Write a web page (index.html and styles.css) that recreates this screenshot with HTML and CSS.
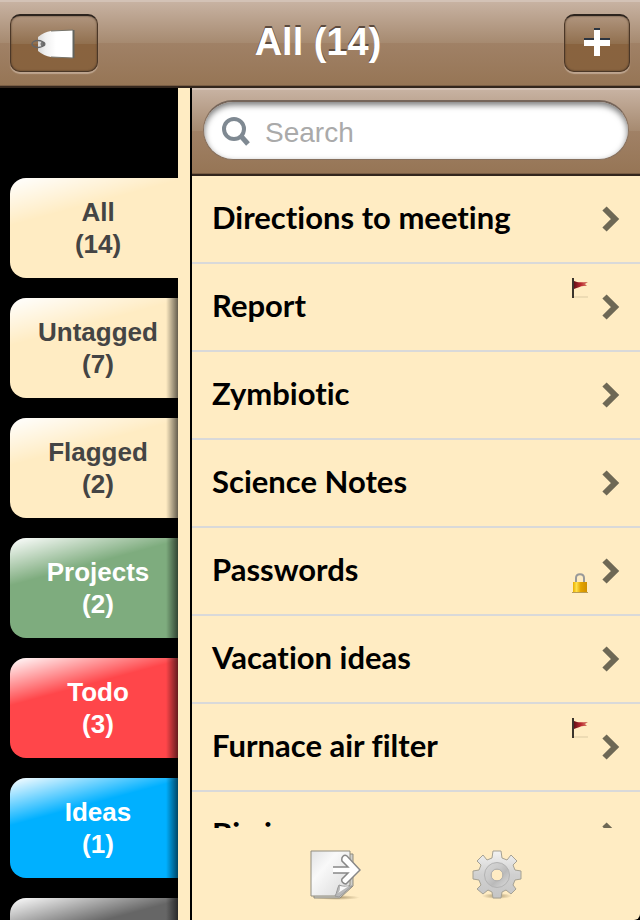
FILE: index.html
```html
<!DOCTYPE html>
<html lang="en">
    <head>
        <meta charset="utf-8" />
        <meta name="viewport" content="width=device-width" />
        <title>All (14)</title>
        <link rel="stylesheet" href="styles.css">
    </head>
    <body>
        <header class="bar titlebar">
            <button type="button" class="barbutton tagbutton" aria-label="Tags">
                <svg width="46" height="30" viewBox="0 0 46 30">
                    <defs>
                        <linearGradient id="tagFill"><stop offset="0" stop-color="#d9d9d9" /><stop offset=".2" stop-color="#f0f0f0" /><stop offset=".5" stop-color="#fff" /></linearGradient>
                    </defs>
                    <path d="M7 8Q13 3 20 2L43 1V29L20 28Q13 27 7 22Z" fill="url(#tagFill)" />
                    <path d="M20 2L42 1M20 28L42 29" fill="none" stroke="#77756c" stroke-width="1" />
                    <path d="M42.500 1V29" stroke="#62645f" stroke-width="2" />
                    <circle cx="12" cy="15" r="2.500" fill="#777" />
                    <ellipse cx="7" cy="15" rx="6" ry="3.500" fill="none" stroke="#666" stroke-width="1.500" />
                </svg>
            </button>
            <h1 class="title">All (14)</h1>
            <button type="button" class="barbutton addbutton" aria-label="Add note">
                <svg width="26" height="28" viewBox="0 0 26 28">
                    <path d="M0 10h10V0h6v10h10v6H16v10h-6V16H0z" fill="#2b3440" />
                    <path d="M0 12h10V2h6v10h10v6H16v10h-6V18H0z" fill="#fff" />
                </svg>
            </button>
        </header>

        <div id="content">
            <nav class="tags">
                <a href="#" class="tag selected">All<br>(14)</a>
                <a href="#" class="tag">Untagged<br>(7)</a>
                <a href="#" class="tag">Flagged<br>(2)</a>
                <a href="#" class="tag green">Projects<br>(2)</a>
                <a href="#" class="tag red">Todo<br>(3)</a>
                <a href="#" class="tag blue">Ideas<br>(1)</a>
                <a href="#" class="tag gray"></a>
            </nav>

            <main class="notes">
                <form class="bar searchbar">
                    <label class="searchfield">
                        <svg width="30" height="32" viewBox="0 0 30 32" fill="none" stroke="#7f8992">
                            <circle cx="13" cy="13" r="10" stroke-width="4" />
                            <path d="M19 19L27 28" stroke-width="5" />
                        </svg>
                        <input type="search" class="searchinput" placeholder="Search" aria-label="Search">
                    </label>
                </form>

                <ul class="notelist">
                    <li><a href="#" class="note"><span class="name">Directions to meeting</span><svg class="chevron" viewBox="0 0 18 26"><use href="#chevronIcon" /></svg></a></li>
                    <li><a href="#" class="note"><span class="name">Report</span><svg class="flag" viewBox="0 0 16 20"><use href="#flagIcon" /></svg><svg class="chevron" viewBox="0 0 18 26"><use href="#chevronIcon" /></svg></a></li>
                    <li><a href="#" class="note"><span class="name">Zymbiotic</span><svg class="chevron" viewBox="0 0 18 26"><use href="#chevronIcon" /></svg></a></li>
                    <li><a href="#" class="note"><span class="name">Science Notes</span><svg class="chevron" viewBox="0 0 18 26"><use href="#chevronIcon" /></svg></a></li>
                    <li><a href="#" class="note"><span class="name">Passwords</span><svg class="lock" viewBox="0 0 16 20"><use href="#lockIcon" /></svg><svg class="chevron" viewBox="0 0 18 26"><use href="#chevronIcon" /></svg></a></li>
                    <li><a href="#" class="note"><span class="name">Vacation ideas</span><svg class="chevron" viewBox="0 0 18 26"><use href="#chevronIcon" /></svg></a></li>
                    <li><a href="#" class="note"><span class="name">Furnace air filter</span><svg class="flag" viewBox="0 0 16 20"><use href="#flagIcon" /></svg><svg class="chevron" viewBox="0 0 18 26"><use href="#chevronIcon" /></svg></a></li>
                    <li><a href="#" class="note"><span class="name">Big in area</span><svg class="chevron" viewBox="0 0 18 26"><use href="#chevronIcon" /></svg></a></li>
                </ul>

                <footer class="toolbar">
                    <button type="button" class="toolbutton" aria-label="Share">
                        <svg width="52" height="50" viewBox="0 0 52 50">
                            <defs>
                                <linearGradient id="paper" x1="0" y1="0" x2="1" y2="1"><stop offset="0" stop-color="#e2e3e4" /><stop offset=".35" stop-color="#f9f9f9" /><stop offset="1" stop-color="#d8d8d8" /></linearGradient>
                                <radialGradient id="shade"><stop offset="0" stop-color="#8a754b" stop-opacity=".7" /><stop offset="1" stop-color="#8a754b" stop-opacity="0" /></radialGradient>
                            </defs>
                            <ellipse cx="28" cy="47.500" rx="23" ry="2.500" fill="url(#shade)" />
                            <path d="M5 4H44V36L31 48H5Z" fill="#d0d0cd" stroke="#8f8b7d" />
                            <path d="M2 1H41V35L27 46H2Z" fill="url(#paper)" stroke="#918d7e" />
                            <path d="M26 46C28 43 28 39 30 35C34 37 38 36 43 36L30 47Z" fill="#b9b9b9" stroke="#999" />
                            <path d="M29 43C31 41 31 39 31 36C34 37 37 37 40 36Z" fill="#f8f8f8" />
                            <path d="M24 17H38L33 11C32 7 35 4 38 6L51 20L37 34C34 34 32 31 33 29L39 23H24" fill="#fff" />
                            <path d="M24 17H39L33 11C32 7 35 4 38 6L51 20L37 34C34 34 32 31 33 29L39 23H24" fill="none" stroke="#888" stroke-width="1.500" />
                        </svg>
                    </button>
                    <button type="button" class="toolbutton" aria-label="Settings">
                        <svg width="52" height="50" viewBox="0 0 52 50">
                            <defs>
                                <linearGradient id="metal" x1="0" y1="0" x2="0" y2="1"><stop offset="0" stop-color="#f3f3f3" /><stop offset=".5" stop-color="#d0d0d0" /><stop offset="1" stop-color="#c5c5c5" /></linearGradient>
                                <linearGradient id="ring" x1="0" y1="0" x2="1" y2="1"><stop offset="0" stop-color="#d8d8d8" /><stop offset=".4" stop-color="#cacaca" /><stop offset=".6" stop-color="#bababa" /><stop offset="1" stop-color="#dedede" /></linearGradient>
                            </defs>
                            <ellipse cx="26" cy="46" rx="15" ry="3" fill="url(#shade)" />
                            <path fill-rule="evenodd" fill="url(#metal)" stroke="#a5a193" d="M22 1H30L31 8L36 10L40 5L46 11L42 15L44 20L50 21V29L44 30L42 35L45 39L40 44L35 40L31 42L30 48H22L21 42L17 40L12 44L6 39L10 35L8 30L2 29V21L8 20L10 15L6 11L12 5L16 10L21 8ZM32 25A6 6 0 1 0 20 25A6 6 0 1 0 32 25Z" />
                            <path fill-rule="evenodd" fill="url(#ring)" stroke="#b3b3b3" d="M38.500 25A12.500 12.500 0 1 0 13.500 25A12.500 12.500 0 1 0 38.500 25ZM32 25A6 6 0 1 0 20 25A6 6 0 1 0 32 25Z" />
                        </svg>
                    </button>
                </footer>
            </main>
        </div>

        <!-- Shared note icons -->
        <svg width="0" height="0" class="symbols">
            <defs>
                <linearGradient id="flagRed"><stop offset="0" stop-color="#651016" /><stop offset=".5" stop-color="#bb2830" /><stop offset="1" stop-color="#d88b72" /></linearGradient>
                <linearGradient id="gold"><stop offset="0" stop-color="#e9ae00" /><stop offset=".25" stop-color="#ffe04a" /><stop offset=".55" stop-color="#e4a400" /><stop offset="1" stop-color="#d09000" /></linearGradient>
                <symbol id="chevronIcon" viewBox="0 0 18 26">
                    <path d="M2.500 2.500L13 13L2.500 23.500" fill="none" stroke="#6e6855" stroke-width="6" />
                </symbol>
                <symbol id="flagIcon" viewBox="0 0 16 20">
                    <path d="M1 19H16" stroke="#dccba5" />
                    <path d="M1 0V20" stroke="#3c352c" stroke-width="2" />
                    <path d="M2 3C6 5 10 4 16 4L13 6L15 8L12 8C8 8 6 10 2 11Z" fill="url(#flagRed)" />
                </symbol>
                <symbol id="lockIcon" viewBox="0 0 16 20">
                    <path d="M4 9V5C4 0 12 0 12 5V9" fill="none" stroke="#999" stroke-width="2" />
                    <rect x="1" y="9" width="14" height="10" fill="url(#gold)" />
                    <path d="M0 19.500H16" stroke="#b79b55" />
                </symbol>
            </defs>
        </svg>
    </body>
</html>
```
FILE: styles.css
```css
* {
    box-sizing: border-box;
}
body {
    display: flex;
    flex-direction: column;
    height: 100vh;
    margin: 0;
    background-color: #000;
    font-family: "Helvetica Neue", "Liberation Sans", Arial, sans-serif;
}
a {
    text-decoration: none;
}
button {
    padding: 0;
    border: none;
    background: none;
    cursor: pointer;
}
svg {
    display: block;
    flex: none;
}
.symbols {
    position: absolute;
}

/* Brown bars */
.bar {
    flex: none;
    height: 88px;
    border-bottom: 2px solid #33261d;
    background: linear-gradient(#c9b4a4, #a68a70 50%, #a08166 50%, #967555);
    box-shadow: inset 0 2px #d3c2b6, inset 0 -1px #795d44;
}
.titlebar {
    display: grid;
    grid-template-columns: 1fr auto 1fr;
    align-items: center;
    padding: 0 10px;
}
.title {
    margin: 0;
    padding: 0 4px 2px 0;
    color: #fff;
    font-size: 38px;
    line-height: 44px;
    text-shadow: 0 -2px #5b4a3e;
}
.barbutton {
    display: flex;
    align-items: center;
    justify-content: center;
    height: 58px;
    border: 1px solid #4b3727;
    border-top: 2px solid #2d241e;
    border-radius: 10px;
    background: linear-gradient(#b0957e, #91704f 50%, #89633f 50%, #88633f);
    box-shadow: inset 0 0 2px #4b3727, 0 2px 1px #bea58f;
}
.tagbutton {
    width: 88px;
}
.addbutton {
    width: 66px;
    padding-bottom: 3px;
    justify-self: end;
}

#content {
    display: flex;
    flex: 1;
    min-height: 0;
}

/* Tag tabs */
.tags {
    display: flex;
    flex-direction: column;
    gap: 20px;
    width: 178px;
    padding: 90px 0 0 10px;
    overflow: hidden;
}
.tag {
    flex: none;
    height: 100px;
    padding: 18px 0 18px 8px;
    border-radius: 16px 0 0 16px;
    background-color: #ffecc3;
    background-image: linear-gradient(to left, rgba(0, 0, 0, .6), transparent 12px), linear-gradient(165deg, #fff, rgba(255, 255, 255, 0) 46px);
    color: #444;
    font-size: 26px;
    font-weight: bold;
    line-height: 32px;
    text-align: center;
}
.selected {
    background-image: linear-gradient(165deg, #fff, rgba(255, 255, 255, 0) 46px);
}
.green,
.red,
.blue {
    color: #fff;
}
.green {
    background-color: #7eac7e;
}
.red {
    background-color: #ff464a;
}
.blue {
    background-color: #00b0ff;
}
.gray {
    background-color: #666;
}

/* Note list */
.notes {
    display: flex;
    flex: 1;
    flex-direction: column;
    min-width: 0;
    border-bottom-right-radius: 6px;
    background: linear-gradient(to right, #ffecc3 12px, #000 12px, #000 14px, #ffecc3 14px);
    padding-left: 14px;
}
.searchbar {
    padding: 12px 11px;
}
.searchfield {
    display: flex;
    align-items: center;
    gap: 14px;
    height: 60px;
    padding: 2px 20px 0 17px;
    border: 1px solid #86705e;
    border-top: 2px solid #75655a;
    border-radius: 30px;
    background-color: #fff;
    box-shadow: inset 0 3px 6px #777;
}
.searchinput {
    flex: 1;
    min-width: 0;
    padding: 2px 0 0;
    border: none;
    outline: none;
    background: none;
    font: 28px/36px "Helvetica Neue", "Liberation Sans", Arial, sans-serif;
}
.searchinput::placeholder {
    color: #aaa;
}
.notelist {
    flex: 1;
    min-height: 0;
    margin: 0;
    padding: 0;
    overflow-y: auto;
    scrollbar-width: none;
    list-style: none;
}
.note {
    display: flex;
    align-items: center;
    gap: 14px;
    height: 88px;
    padding: 0 20px;
    border-bottom: 2px solid #d9d9d9;
    color: #000;
}
.name {
    flex: 1;
    padding-bottom: 4px;
    font: bold 31px/44px "Marker Felt", Lato, "Liberation Sans", sans-serif;
    font-variant-ligatures: none;
}
.chevron {
    width: 18px;
    height: 26px;
}
.flag,
.lock {
    width: 16px;
    height: 20px;
}
.flag {
    align-self: flex-start;
    margin-top: 14px;
}
.lock {
    align-self: flex-end;
    margin-bottom: 21px;
}

.toolbar {
    display: flex;
    flex: none;
    align-items: center;
    justify-content: center;
    gap: 110px;
    height: 92px;
    padding-top: 2px;
}
```
